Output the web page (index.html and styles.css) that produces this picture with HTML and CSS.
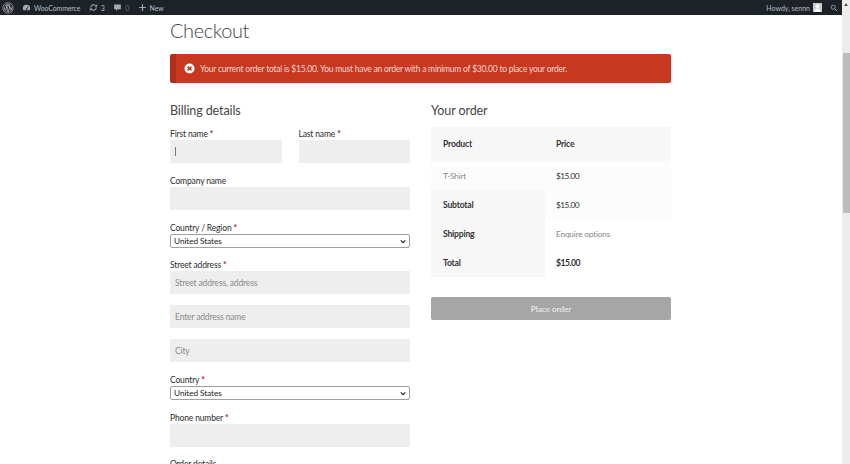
FILE: index.html
```html
<!DOCTYPE html>
<html lang="en">
<head>
<meta charset="utf-8">
<title>Checkout</title>
<link rel="stylesheet" href="styles.css">
</head>
<body>
<div class="window">
<div class="content">
<div class="adminbar">
  <div class="bar-left">
    <svg class="wp" viewBox="0 0 20 20"><circle cx="10" cy="10" r="8.6" fill="none" stroke="#a7aaad" stroke-width="1.3"/><path fill="#a7aaad" d="M3.4 10c0 2.6 1.5 4.9 3.7 6L4 7.4C3.6 8.2 3.4 9.1 3.4 10zm11-.3c0-.8-.3-1.4-.5-1.8-.3-.5-.6-.9-.6-1.4 0-.5.4-1 1-1h.1A6.6 6.6 0 0 0 4.4 6.500h.4c.7 0 1.800-.1 1.800-.1.4 0 .4.500 0 .6l-.8.1 2.500 7.400 1.500-4.500-1.100-2.900-.7-.1c-.4 0-.3-.6 0-.6 0 0 1.100.1 1.800.1s1.800-.1 1.800-.1c.4 0 .4.500 0 .6l-.8.1 2.500 7.400.7-2.300c.3-.9.500-1.600.500-2.100zM10.100 10.600l-2 5.900a6.600 6.600 0 0 0 4.100-.1zM15.900 6.800c0 .3.100.5.100.8 0 .7-.1 1.500-.5 2.400l-2 5.800a6.600 6.600 0 0 0 2.400-9z"/></svg>
    <span class="bar-item"><svg class="ic" viewBox="0 0 16 16"><path fill="#a7aaad" d="M8 3a6.500 6.500 0 0 0-6.500 6.500c0 1.300.4 2.500 1 3.500h11c.6-1 1-2.200 1-3.500A6.500 6.500 0 0 0 8 3zm0 6.800L11 6l.8.600L9 10.500A1.300 1.300 0 1 1 8 9.800z"/></svg>WooCommerce</span>
    <span class="bar-item"><svg class="ic" viewBox="0 0 16 16"><path fill="none" stroke="#a7aaad" stroke-width="1.800" d="M3 8a5 5 0 0 1 8.500-3.500M13 8a5 5 0 0 1-8.500 3.500"/><path fill="#a7aaad" d="M10 6.500h4.500V2zM6 9.500H1.500V14z"/></svg>3</span>
    <span class="bar-item dim"><svg class="ic" viewBox="0 0 16 16"><path fill="#a7aaad" d="M2 2.500h12v8.500H8.500L5.500 14v-3H2z"/></svg>0</span>
    <span class="bar-item"><svg class="ic" viewBox="0 0 16 16"><path fill="#a7aaad" d="M7 2h2v5h5v2H9v5H7V9H2V7h5z"/></svg>New</span>
  </div>
  <div class="bar-right">
    <span>Howdy, sennn</span>
    <span class="avatar"><svg viewBox="0 0 10 10"><circle cx="5" cy="3.500" r="2" fill="#fff"/><path fill="#fff" d="M1.500 10c0-3 1.500-4 3.500-4s3.500 1 3.500 4z"/></svg></span>
    <svg class="search" viewBox="0 0 16 16"><circle cx="6.500" cy="6.500" r="4" fill="none" stroke="#a7aaad" stroke-width="1.600"/><path stroke="#a7aaad" stroke-width="2" d="M9.500 9.500l4.500 4.500"/></svg>
  </div>
</div>

  <main class="page">
    <h1 class="title">Checkout</h1>
    <div class="notice">
      <svg class="notice-ic" viewBox="0 0 12 12"><circle cx="6" cy="6" r="5.500" fill="#fff"/><path stroke="#c7371f" stroke-width="1.700" d="M3.900 3.900l4.200 4.200M8.100 3.900l-4.200 4.200"/></svg>
      <span>Your current order total is $15.00. You must have an order with a minimum of $30.00 to place your order.</span>
    </div>
    <div class="columns">
      <section class="billing">
        <h2 class="heading">Billing details</h2>
        <div class="name-row">
          <div class="field"><label class="lbl">First name <b class="req">*</b></label><div class="input"><i class="caret"></i></div></div>
          <div class="field"><label class="lbl">Last name <b class="req">*</b></label><div class="input"></div></div>
        </div>
        <div class="field"><label class="lbl">Company name</label><div class="input"></div></div>
        <div class="field short"><label class="lbl">Country / Region <b class="req">*</b></label>
          <div class="select">United States<svg class="chev" viewBox="0 0 8 6"><path fill="none" stroke="#222" stroke-width="1.500" d="M1 1.500l3 3 3-3"/></svg></div></div>
        <div class="field"><label class="lbl">Street address <b class="req">*</b></label><div class="input">Street address, address</div></div>
        <div class="input stacked">Enter address name</div>
        <div class="input stacked">City</div>
        <div class="field"><label class="lbl">Country <b class="req">*</b></label>
          <div class="select">United States<svg class="chev" viewBox="0 0 8 6"><path fill="none" stroke="#222" stroke-width="1.500" d="M1 1.500l3 3 3-3"/></svg></div></div>
        <div class="field short"><label class="lbl">Phone number <b class="req">*</b></label><div class="input"></div></div>
        <div class="field"><label class="lbl">Order details</label></div>
      </section>
      <section class="order">
        <h2 class="heading">Your order</h2>
        <div class="table">
          <div class="cell first head b">Product</div><div class="cell head b">Price</div>
          <div class="cell first soft muted">T-Shirt</div><div class="cell soft num">$15.00</div>
          <div class="cell first head b">Subtotal</div><div class="cell soft num">$15.00</div>
          <div class="cell first head b">Shipping</div><div class="cell muted">Enquire options</div>
          <div class="cell first head b">Total</div><div class="cell b num">$15.00</div>
        </div>
        <button class="place" type="button">Place order</button>
      </section>
    </div>
  </main>
</div>
<div class="scrollbar"><span class="arrow"></span><span class="thumb"></span></div>
</div>
</body>
</html>
```

FILE: styles.css
```css
html, body { margin: 0; height: 464px; overflow: hidden; background: #fff; }
body { font-family: "Lato", "Liberation Sans", sans-serif; color: #333; font-size: 9px; }
.window { display: flex; height: 464px; overflow: hidden; }
.content { flex: 1; min-width: 0; }
.adminbar { height: 15px; background: #1d2229; color: #b9bcc0; display: flex; justify-content: space-between; align-items: center; font-size: 7px; letter-spacing: -0.15px; }
.bar-left, .bar-right { display: flex; align-items: center; }
.wp { width: 12px; height: 12px; margin: 0 8px 0 2px; }
.bar-item { display: flex; align-items: center; gap: 3px; margin-right: 8.500px; }
.bar-item.dim { color: #6b6f75; }
.ic { width: 9px; height: 9px; }
.bar-right { margin-right: 4px; letter-spacing: 0; }
.avatar { width: 9px; height: 9px; background: #ccc; display: block; margin-left: 3px; }
.avatar svg { display: block; width: 9px; height: 9px; }
.search { width: 8px; height: 8px; margin-left: 8px; }
.page { padding-left: 170px; }
.title { width: 501px; margin: 0; height: 39px; font-size: 20px; font-weight: 300; letter-spacing: -0.4px; line-height: 30px; color: #444; }
.notice { width: 501px; height: 29px; box-sizing: border-box; background: #c8371f; border-left: 6px solid #b32d18; border-radius: 2px; color: #f5d9d2; display: flex; align-items: center; gap: 5px; padding-left: 8px; font-size: 8.500px; letter-spacing: -0.22px; }
.notice-ic { width: 11px; height: 11px; flex: none; }
.columns { display: flex; gap: 21px; width: 501px; padding-top: 19px; }
.billing, .order { width: 240px; }
.heading { margin: 0 0 8px; font-size: 12.500px; font-weight: 400; letter-spacing: -0.1px; line-height: 17px; color: #444; }
.name-row { display: flex; gap: 17px; }
.name-row .field { flex: 1; }
.field { margin-bottom: 11px; }
.field.short { margin-bottom: 10px; }
.lbl { display: block; padding-top: 1px; line-height: 12px; color: #2c2c2c; font-size: 8.500px; letter-spacing: -0.15px; }
.req { color: #b0161e; font-weight: 700; }
.input { height: 23px; box-sizing: border-box; background: #eee; display: flex; align-items: center; padding-left: 5px; color: #8a8a8a; font-size: 8.500px; letter-spacing: -0.15px; }
.stacked { margin-bottom: 11px; }
.caret { width: 1px; height: 9px; background: #777; }
.select { height: 14px; box-sizing: border-box; background: #fff; border: 1px solid #a0a0a0; border-radius: 2px; display: flex; align-items: center; justify-content: space-between; padding: 0 3px; color: #222; font-size: 8.300px; letter-spacing: -0.1px; }
.chev { width: 6px; height: 5px; }
.table { display: grid; grid-template-columns: 114px 126px; grid-template-rows: 34px repeat(4, 29px); }
.cell { display: flex; align-items: center; padding-left: 11px; color: #333; font-size: 8.300px; letter-spacing: -0.2px; }
.first { padding-left: 12px; }
.num { letter-spacing: -0.5px; }
.head { background: #f7f7f7; }
.soft { background: #fcfcfc; }
.b { font-size: 8.600px; font-weight: 700; }
.muted { color: #888; }
.place { display: block; width: 240px; height: 23px; margin-top: 20px; padding: 0; border: 0; border-radius: 2px; background: #a6a6a6; color: #e3e3e3; font: 700 8.300px "Lato", "Liberation Sans", sans-serif; letter-spacing: -0.1px; }
.scrollbar { width: 8px; flex: none; background: #ececec; display: flex; flex-direction: column; align-items: center; }
.arrow { width: 0; height: 0; margin-top: 1px; border: 2px solid transparent; border-bottom: 3px solid #555; }
.thumb { width: 7px; height: 160px; margin-top: 47px; background: #bbb; }
```
